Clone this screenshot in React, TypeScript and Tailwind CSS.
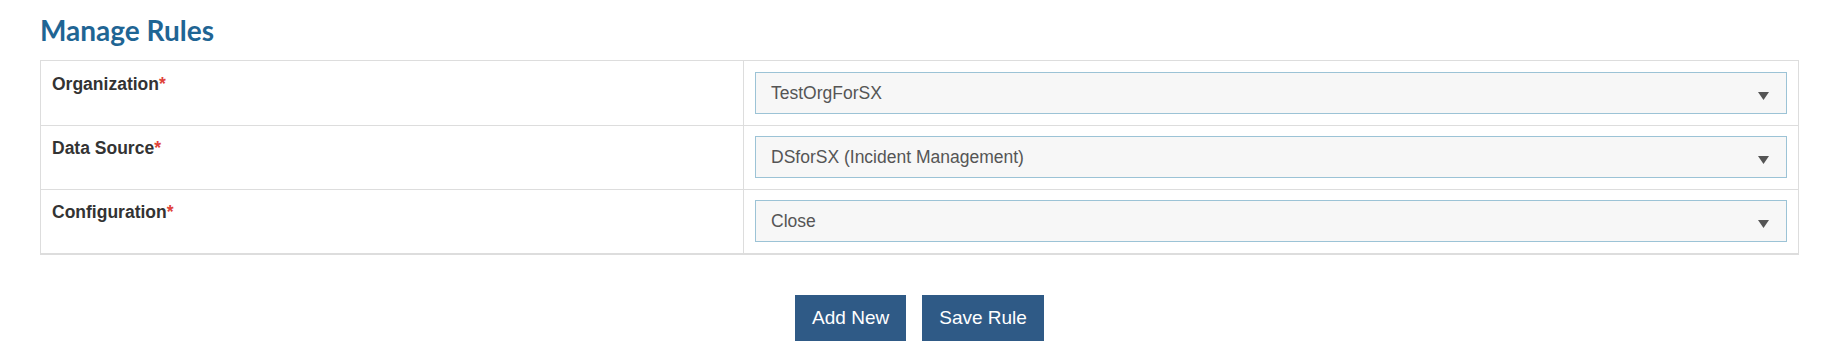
const rows = [
  { label: 'Organization', value: 'TestOrgForSX' },
  { label: 'Data Source', value: 'DSforSX (Incident Management)' },
  { label: 'Configuration', value: 'Close' },
];

const SelectBox = ({ value }: { value: string }) => (
  <div className="flex h-[42px] items-center justify-between border border-[#9cc3d6] bg-[#f7f7f7] pl-[15px] pr-[17px] text-[17.5px] text-[#555]">
    <span>{value}</span>
    <svg width="11" height="8" viewBox="0 0 11 8" className="mt-[5px]">
      <polygon points="0,0 11,0 5.5,8" fill="#555" />
    </svg>
  </div>
);

export default function App() {
  return (
    <div
      className="h-[355px] w-[1837px] bg-white pl-[40px] pr-[38px]"
      style={{ fontFamily: '"Liberation Sans", Arial, sans-serif' }}
    >
      <h1
        className="h-[60px] pt-[13px] text-[28px] font-bold leading-[34px] text-[#1f6594]"
        style={{ fontFamily: 'Lato, "Open Sans", sans-serif' }}
      >
        Manage Rules
      </h1>

      <div className="border border-b-2 border-[#dddddd]">
        {rows.map((row, i) => (
          <div key={row.label} className={`flex ${i > 0 ? 'border-t border-[#dddddd]' : ''}`}>
            <div
              className={`w-[703px] border-r border-[#dddddd] px-[11px] text-[17.5px] font-bold leading-[24px] text-[#333] ${i > 0 ? 'pt-[10px]' : 'pt-[11px]'}`}
            >
              {row.label}
              <span className="text-[#e0433a]">*</span>
            </div>
            <div className={`flex-1 px-[11px] pb-[11px] ${i > 0 ? 'pt-[10px]' : 'pt-[11px]'}`}>
              <SelectBox value={row.value} />
            </div>
          </div>
        ))}
      </div>

      <div className="mt-[40px] flex justify-center gap-[16px]">
        <button className="h-[46px] bg-[#2f5a86] px-[17px] text-[19px] text-white">Add New</button>
        <button className="h-[46px] bg-[#2f5a86] px-[17px] text-[19px] text-white">Save Rule</button>
      </div>
    </div>
  );
}
